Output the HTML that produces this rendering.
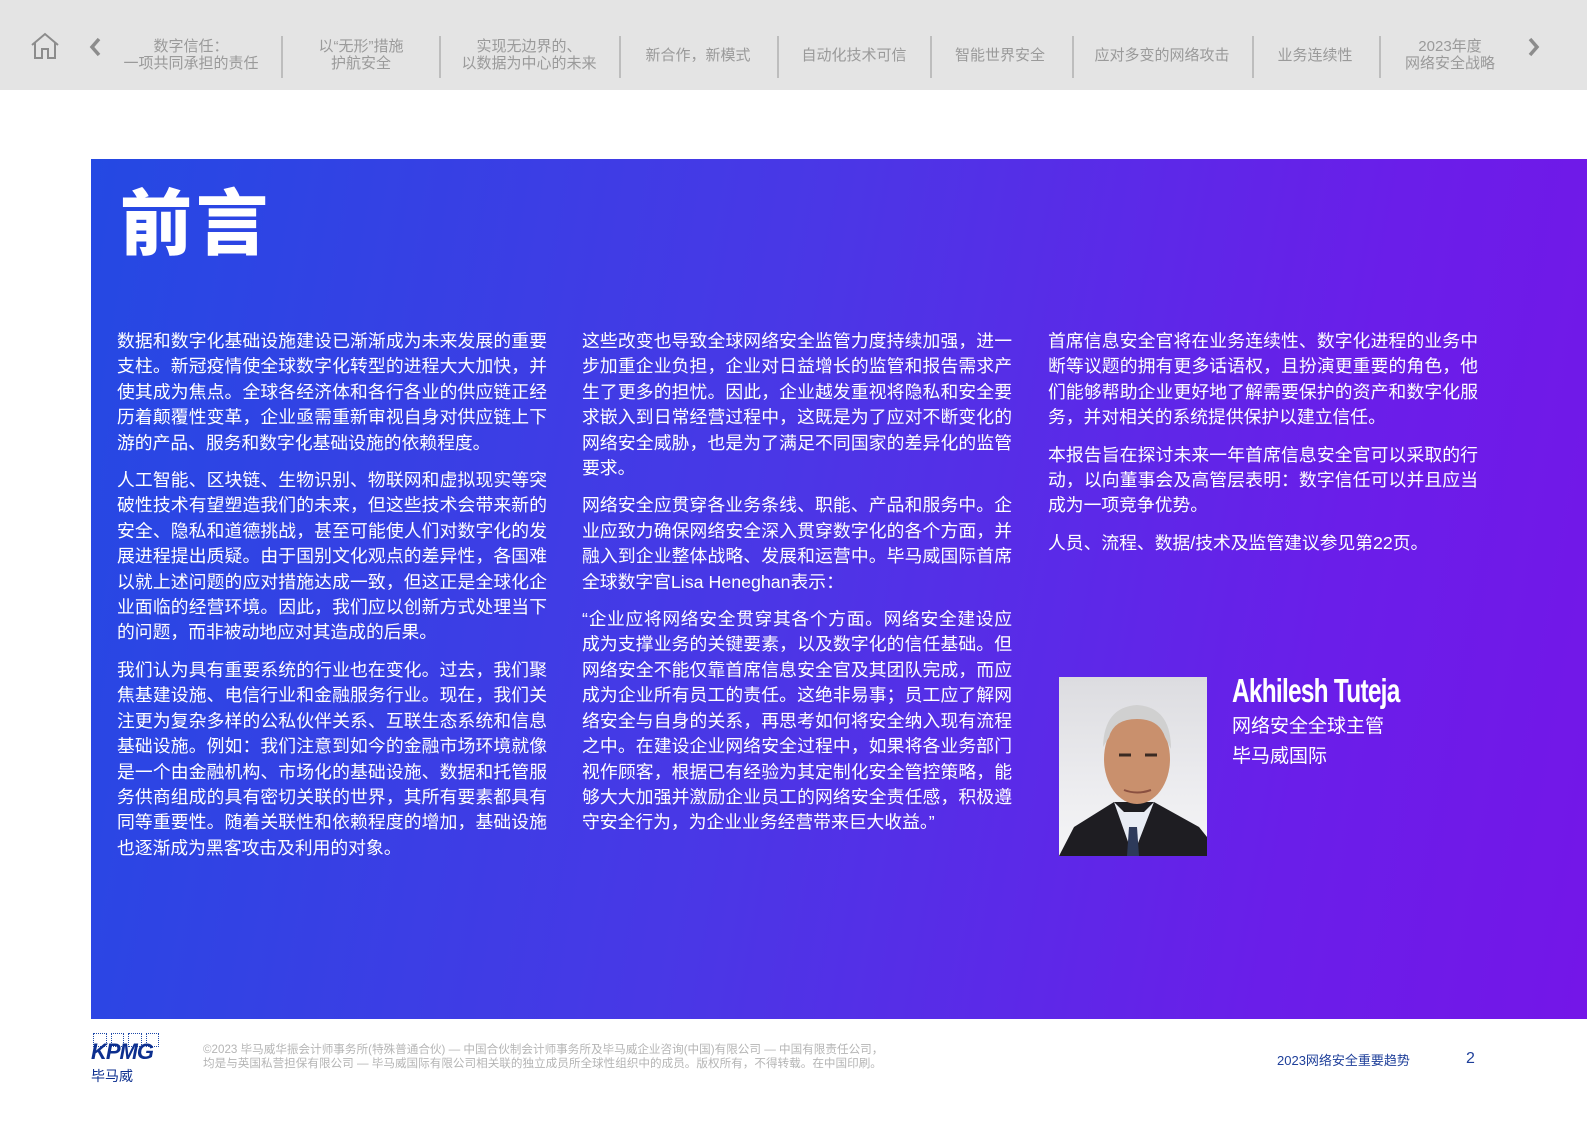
<!DOCTYPE html>
<html><head><meta charset="utf-8"><style>
*{margin:0;padding:0;box-sizing:border-box}
body{width:1587px;height:1122px;position:relative;background:#fff;font-family:"Liberation Sans","Noto Sans CJK SC",sans-serif;overflow:hidden}
.nav{position:absolute;left:0;top:0;width:1587px;height:90px;background:#e4e4e4}
.ni{position:absolute;top:38px;transform:translateX(-50%);text-align:center;color:#9a9a9a;font-size:15px;line-height:17px;white-space:nowrap}
.ni.one{top:47px}
.sep{position:absolute;top:36px;width:2px;height:42px;background:#bdbdbd}
.panel{position:absolute;left:91px;top:159px;width:1496px;height:860px;background:linear-gradient(100deg,#2449e3 0%,#4a37e6 45%,#6a1ee9 80%,#7416e8 100%)}
h1{position:absolute;left:120px;top:165px;font-size:72px;color:#fff;font-weight:900;letter-spacing:4px;font-family:"Noto Sans CJK SC",sans-serif}
.col{position:absolute;top:329px;width:430px;color:#fff;font-size:17.8px;line-height:25.4px;font-family:"Liberation Sans","Noto Sans CJK SC",sans-serif}
.col p{margin-bottom:12px;text-align:justify}
.photo{position:absolute;left:1059px;top:677px;width:148px;height:179px;background:linear-gradient(180deg,#dcdce0 0%,#ececef 60%,#f5f5f7 100%);overflow:hidden}
.name{position:absolute;left:1232px;top:672px;color:#fff;font-size:33px;font-weight:bold;letter-spacing:-1px;transform:scaleX(.74);transform-origin:left}
.role{position:absolute;left:1232px;top:712px;color:#fff;font-size:19px;line-height:30px}
.foot{position:absolute;top:1043px;left:203px;color:#b5b5b5;font-size:11.6px;line-height:14px}
</style></head><body>
<div class="nav">
<svg style="position:absolute;left:30px;top:32px" width="30" height="28" viewBox="0 0 30 28" fill="none" stroke="#8c8c8c" stroke-width="2"><path d="M2 13 L15 2 L28 13 M5 11 V26 H12 V17 H18 V26 H25 V11"/></svg>
<svg style="position:absolute;left:88px;top:37px" width="14" height="20" viewBox="0 0 14 20" fill="none" stroke="#8c8c8c" stroke-width="3.5"><path d="M11 2 L4 10 L11 18"/></svg>
<svg style="position:absolute;left:1527px;top:37px" width="14" height="20" viewBox="0 0 14 20" fill="none" stroke="#8c8c8c" stroke-width="3.5"><path d="M3 2 L10 10 L3 18"/></svg>
<div class="ni" style="left:191px">数字信任：<br>一项共同承担的责任</div>
<div class="sep" style="left:281px"></div>
<div class="ni" style="left:361px">以“无形”措施<br>护航安全</div>
<div class="sep" style="left:439px"></div>
<div class="ni" style="left:529px">实现无边界的、<br>以数据为中心的未来</div>
<div class="sep" style="left:619px"></div>
<div class="ni one" style="left:698px">新合作，新模式</div>
<div class="sep" style="left:777px"></div>
<div class="ni one" style="left:854px">自动化技术可信</div>
<div class="sep" style="left:930px"></div>
<div class="ni one" style="left:1000px">智能世界安全</div>
<div class="sep" style="left:1072px"></div>
<div class="ni one" style="left:1162px">应对多变的网络攻击</div>
<div class="sep" style="left:1252px"></div>
<div class="ni one" style="left:1315px">业务连续性</div>
<div class="sep" style="left:1379px"></div>
<div class="ni" style="left:1450px">2023年度<br>网络安全战略</div>
</div>
<div class="panel"></div>
<h1>前言</h1>
<div class="col" style="left:117px">
<p>数据和数字化基础设施建设已渐渐成为未来发展的重要支柱。新冠疫情使全球数字化转型的进程大大加快，并使其成为焦点。全球各经济体和各行各业的供应链正经历着颠覆性变革，企业亟需重新审视自身对供应链上下游的产品、服务和数字化基础设施的依赖程度。</p>
<p>人工智能、区块链、生物识别、物联网和虚拟现实等突破性技术有望塑造我们的未来，但这些技术会带来新的安全、隐私和道德挑战，甚至可能使人们对数字化的发展进程提出质疑。由于国别文化观点的差异性，各国难以就上述问题的应对措施达成一致，但这正是全球化企业面临的经营环境。因此，我们应以创新方式处理当下的问题，而非被动地应对其造成的后果。</p>
<p>我们认为具有重要系统的行业也在变化。过去，我们聚焦基建设施、电信行业和金融服务行业。现在，我们关注更为复杂多样的公私伙伴关系、互联生态系统和信息基础设施。例如：我们注意到如今的金融市场环境就像是一个由金融机构、市场化的基础设施、数据和托管服务供商组成的具有密切关联的世界，其所有要素都具有同等重要性。随着关联性和依赖程度的增加，基础设施也逐渐成为黑客攻击及利用的对象。</p>
</div>
<div class="col" style="left:582px">
<p>这些改变也导致全球网络安全监管力度持续加强，进一步加重企业负担，企业对日益增长的监管和报告需求产生了更多的担忧。因此，企业越发重视将隐私和安全要求嵌入到日常经营过程中，这既是为了应对不断变化的网络安全威胁，也是为了满足不同国家的差异化的监管要求。</p>
<p>网络安全应贯穿各业务条线、职能、产品和服务中。企业应致力确保网络安全深入贯穿数字化的各个方面，并融入到企业整体战略、发展和运营中。毕马威国际首席全球数字官Lisa Heneghan表示：</p>
<p>“企业应将网络安全贯穿其各个方面。网络安全建设应成为支撑业务的关键要素，以及数字化的信任基础。但网络安全不能仅靠首席信息安全官及其团队完成，而应成为企业所有员工的责任。这绝非易事；员工应了解网络安全与自身的关系，再思考如何将安全纳入现有流程之中。在建设企业网络安全过程中，如果将各业务部门视作顾客，根据已有经验为其定制化安全管控策略，能够大大加强并激励企业员工的网络安全责任感，积极遵守安全行为，为企业业务经营带来巨大收益。”</p>
</div>
<div class="col" style="left:1048px">
<p>首席信息安全官将在业务连续性、数字化进程的业务中断等议题的拥有更多话语权，且扮演更重要的角色，他们能够帮助企业更好地了解需要保护的资产和数字化服务，并对相关的系统提供保护以建立信任。</p>
<p>本报告旨在探讨未来一年首席信息安全官可以采取的行动，以向董事会及高管层表明：数字信任可以并且应当成为一项竞争优势。</p>
<p>人员、流程、数据/技术及监管建议参见第22页。</p>
</div>
<div class="photo">
<svg width="148" height="179" viewBox="0 0 148 179">
<path d="M0 179 L15 150 L55 125 L95 125 L140 150 L148 160 L148 179Z" fill="#1e1d22"/>
<path d="M55 125 L74 179 L95 125 L85 135 L65 135Z" fill="#e8ecf4"/>
<path d="M70 150 L78 150 L80 179 L68 179Z" fill="#2d3a5a"/>
<ellipse cx="78" cy="82" rx="33" ry="45" fill="#c9906d"/>
<path d="M44 70 Q45 30 78 28 Q112 30 112 72 L106 60 Q100 42 78 42 Q55 42 50 60Z" fill="#d0d0d0"/>
<path d="M60 78 h12 M86 78 h12" stroke="#3a2a22" stroke-width="3"/>
<path d="M65 113 Q78 118 92 113" stroke="#8a5040" stroke-width="2" fill="none"/>
</svg>
</div>
<div class="name">Akhilesh Tuteja</div>
<div class="role">网络安全全球主管<br>毕马威国际</div>
<div style="position:absolute;left:93px;top:1033px;width:66px;height:14px;display:flex;gap:4px"><span style="flex:1;border:1px dotted #1e49a8"></span><span style="flex:1;border:1px dotted #1e49a8"></span><span style="flex:1;border:1px dotted #1e49a8"></span><span style="flex:1;border:1px dotted #1e49a8"></span></div>
<div style="position:absolute;left:91px;top:1039px;color:#0c2f8f;font-size:22px;font-weight:bold;font-style:italic;letter-spacing:-1px">KPMG</div>
<div style="position:absolute;left:91px;top:1066px;color:#0c2f8f;font-size:14px">毕马威</div>
<div class="foot">©2023 毕马威华振会计师事务所(特殊普通合伙) — 中国合伙制会计师事务所及毕马威企业咨询(中国)有限公司 — 中国有限责任公司，<br>均是与英国私营担保有限公司 — 毕马威国际有限公司相关联的独立成员所全球性组织中的成员。版权所有，不得转载。在中国印刷。</div>
<div style="position:absolute;left:1277px;top:1050px;color:#1e3f9a;font-size:13px">2023网络安全重要趋势</div>
<div style="position:absolute;left:1466px;top:1050px;color:#1e3f9a;font-size:16px">2</div>
</body></html>
